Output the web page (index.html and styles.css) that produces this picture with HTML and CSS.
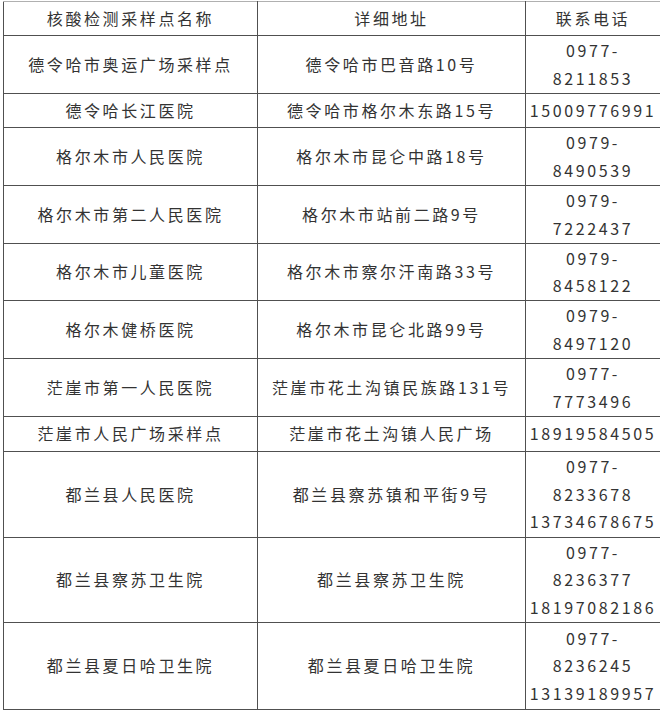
FILE: index.html
```html
<!DOCTYPE html>
<html lang="zh">
<head>
<meta charset="utf-8">
<link rel="stylesheet" href="styles.css">
</head>
<body>
<div class="wrap">
<table class="sites">
<colgroup><col class="c1"><col class="c2"><col class="c3"></colgroup>
<tr class="h34"><th>核酸检测采样点名称</th><th>详细地址</th><th>联系电话</th></tr>
<tr class="h58"><td>德令哈市奥运广场采样点</td><td>德令哈市巴音路10号</td><td>0977-<br>8211853</td></tr>
<tr class="h34"><td>德令哈长江医院</td><td>德令哈市格尔木东路15号</td><td>15009776991</td></tr>
<tr class="h58"><td>格尔木市人民医院</td><td>格尔木市昆仑中路18号</td><td>0979-<br>8490539</td></tr>
<tr class="h58"><td>格尔木市第二人民医院</td><td>格尔木市站前二路9号</td><td>0979-<br>7222437</td></tr>
<tr class="h57"><td>格尔木市儿童医院</td><td>格尔木市察尔汗南路33号</td><td>0979-<br>8458122</td></tr>
<tr class="h58"><td>格尔木健桥医院</td><td>格尔木市昆仑北路99号</td><td>0979-<br>8497120</td></tr>
<tr class="h58"><td>茫崖市第一人民医院</td><td>茫崖市花土沟镇民族路131号</td><td>0977-<br>7773496</td></tr>
<tr class="h35"><td>茫崖市人民广场采样点</td><td>茫崖市花土沟镇人民广场</td><td>18919584505</td></tr>
<tr class="h86"><td>都兰县人民医院</td><td>都兰县察苏镇和平街9号</td><td>0977-<br>8233678<br>13734678675</td></tr>
<tr class="h85"><td>都兰县察苏卫生院</td><td>都兰县察苏卫生院</td><td>0977-<br>8236377<br>18197082186</td></tr>
<tr class="h87"><td>都兰县夏日哈卫生院</td><td>都兰县夏日哈卫生院</td><td>0977-<br>8236245<br>13139189957</td></tr>
</table>
</div>
</body>
</html>
```
FILE: styles.css
```css
html, body {
  margin: 0;
  padding: 0;
  background: #ffffff;
}
.wrap {
  padding: 1px 0 0 3px;
}
.sites {
  border-collapse: collapse;
  table-layout: fixed;
  width: 657px;
  font-family: "Noto Sans CJK SC", "Noto Sans", sans-serif;
  font-size: 16px;
  letter-spacing: 2.6px;
  color: #333333;
}
.c1 { width: 254px; }
.c2 { width: 268px; }
.c3 { width: 135px; }
.sites th, .sites td {
  border: 1px solid #505050;
  padding: 0;
  text-align: center;
  vertical-align: middle;
  font-weight: normal;
  line-height: 27.5px;
  white-space: nowrap;
}
.sites tr > :last-child {
  border-right-color: #a0a0a0;
}
.sites tr:first-child > * {
  border-top-color: #b0b0b0;
}
.h34 { height: 34px; }
.h35 { height: 35px; }
.h57 { height: 57px; }
.h58 { height: 58px; }
.h85 { height: 85px; }
.h86 { height: 86px; }
.h87 { height: 87px; }
```
